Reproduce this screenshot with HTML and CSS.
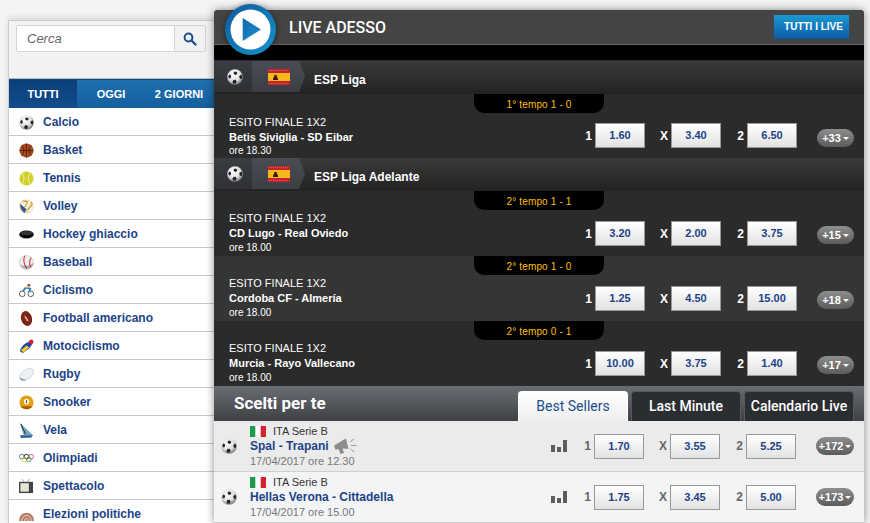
FILE: index.html
```html
<!DOCTYPE html>
<html lang="it">
<head>
<meta charset="utf-8">
<title>Live adesso</title>
<link rel="stylesheet" href="styles.css">
</head>
<body>
<svg class="defs" width="0" height="0" aria-hidden="true">
  <defs>
    <radialGradient id="ballg" cx="42%" cy="35%" r="68%"><stop offset="0" stop-color="#fff"/><stop offset=".6" stop-color="#dedede"/><stop offset="1" stop-color="#6e6e6e"/></radialGradient>
    <symbol id="ball" viewBox="0 0 16 16">
      <circle cx="8" cy="8" r="7.8" fill="url(#ballg)"/>
      <path d="M8.200 2.600l2 .9-.3 1.800-1.800.6-1.500-1.100.2-1.600zM2.400 5.400l1.300.5.400 2.100-1.100 1.400-1.400-.5-.2-2zM12.700 6.400l2-.6.500 2.200-.6 2-1.500-.3-.9-1.700zM6.400 11l2.300-.2.900 1.900-1.100 2.100-2.200-.2-.9-1.500z" fill="#242424"/>
    </symbol>
    <symbol id="flag-es" viewBox="0 0 22 16">
      <rect width="22" height="16" fill="#c8202c"/>
      <rect y="4" width="22" height="8" fill="#f4b81c"/>
      <path d="M5 11h5V9.500L8.700 7.500 8.700 6H6.300v1.500L5 9.500z" fill="#3a1c10"/>
      <path d="M1 1.500h20M1 14.500h20" stroke="#e7838a" stroke-dasharray="1 1" stroke-width=".6"/>
    </symbol>
    <symbol id="flag-it" viewBox="0 0 16 11">
      <rect width="16" height="11" fill="#fff"/>
      <rect width="5.300" height="11" fill="#1f9a4b"/>
      <rect x="10.700" width="5.300" height="11" fill="#d3232f"/>
    </symbol>
    <symbol id="bars" viewBox="0 0 16 12">
      <path d="M0 5h4v7H0zM6 7h4v5H6zM12 0h4v12h-4z" fill="#5d5d5d"/>
    </symbol>
  </defs>
</svg>

<aside class="sidebar">
  <div class="search-area">
    <div class="search">
      <span class="search-input">Cerca</span>
      <span class="search-btn">
        <svg width="14" height="14" viewBox="0 0 14 14"><circle cx="5.500" cy="5.500" r="3.900" fill="none" stroke="#1c4f8e" stroke-width="2"/><path d="M8.500 8.500l4 4" stroke="#1c4f8e" stroke-width="2.400" stroke-linecap="round"/></svg>
      </span>
    </div>
  </div>
  <nav class="period-tabs">
    <span class="period-tab is-active">TUTTI</span>
    <span class="period-tab">OGGI</span>
    <span class="period-tab">2 GIORNI</span>
  </nav>
  <ul class="sports">
    <li class="sport"><svg class="sport-icon" viewBox="0 0 16 16"><use href="#ball"/></svg>Calcio</li>
    <li class="sport"><svg class="sport-icon" viewBox="0 0 16 16"><circle cx="8" cy="8" r="7.500" fill="#a8481c"/><path d="M.5 8h15M8 .5v15M3 2.500c3 3 3 8 0 11M13 2.500c-3 3-3 8 0 11" stroke="#40190a" fill="none" stroke-width=".8"/></svg>Basket</li>
    <li class="sport"><svg class="sport-icon" viewBox="0 0 16 16"><circle cx="8" cy="8" r="7.500" fill="#cfd02e"/><path d="M3 2c3 3 3 9 0 12M12 1.500c-2.500 3-2.500 10 0 13" stroke="#f2f2a0" fill="none"/></svg>Tennis</li>
    <li class="sport"><svg class="sport-icon" viewBox="0 0 16 16"><circle cx="8" cy="8" r="7.500" fill="#e8d9a8"/><path d="M1 6c3-3 8-5 12-3L8 11zM8 11l6-6c1 3 1 6-1 8-2 1-4 1-5-2z" fill="#f3f3f3"/><path d="M1.200 5C1 8 2 12 6 15l2-4z" fill="#34598e"/><path d="M4 2l5 1L6 9M13 3l1 3-5 6" stroke="#d8a32a" fill="none" stroke-width="1.400"/></svg>Volley</li>
    <li class="sport"><svg class="sport-icon" viewBox="0 0 16 16"><ellipse cx="8" cy="8" rx="7.800" ry="4.300" fill="#0a0a0a"/><ellipse cx="8" cy="6.500" rx="7" ry="2.300" fill="#333"/></svg>Hockey ghiaccio</li>
    <li class="sport"><svg class="sport-icon" viewBox="0 0 16 16"><circle cx="8" cy="8" r="7.500" fill="#eee" stroke="#aaa" stroke-width=".5"/><path d="M1 10c2 5 8 6 12 3 2-2 2.500-4 2.500-5-3 4-10 5-14.500 2z" fill="#a8a8a8"/><path d="M6 1c-1.500 4-1 9 2.500 13.500M13 3c-2 3-2 7-.5 10" stroke="#c8323a" fill="none" stroke-width="1.100"/></svg>Baseball</li>
    <li class="sport"><svg class="sport-icon" viewBox="0 0 16 16"><circle cx="3.500" cy="11.500" r="3" fill="none" stroke="#555"/><circle cx="12.500" cy="11.500" r="3" fill="none" stroke="#555"/><path d="M4 9l3-4 5 1-1 4" fill="none" stroke="#2c7bc0" stroke-width="2"/><circle cx="10.500" cy="2.500" r="1.600" fill="#8a3fa8"/><path d="M7 5l4-1" stroke="#e3c22a" stroke-width="1.500"/></svg>Ciclismo</li>
    <li class="sport"><svg class="sport-icon" viewBox="0 0 16 16"><ellipse cx="8" cy="8" rx="5.800" ry="8" transform="rotate(-15 8 8)" fill="#7c2415"/><path d="M6 5l4 6M6.500 8l2-1M7.500 10l2-1" stroke="#eddcc8"/></svg>Football americano</li>
    <li class="sport"><svg class="sport-icon" viewBox="0 0 16 16"><path d="M1 13c1-5 5-9 12-11l2 2-4 6-7 5z" fill="#2446a8"/><circle cx="13" cy="3" r="2.400" fill="#d8232a"/><path d="M2 12l6-5 3 2-6 5z" fill="#f0cf22"/></svg>Motociclismo</li>
    <li class="sport"><svg class="sport-icon" viewBox="0 0 16 16"><ellipse cx="8" cy="8" rx="8.500" ry="5" transform="rotate(-35 8 8)" fill="#eef0f2" stroke="#b9c4cf" stroke-width=".6"/><path d="M1.500 12c2 2 3 2.500 5 1.500" stroke="#5a8cc0" fill="none" stroke-width="1.200"/></svg>Rugby</li>
    <li class="sport"><svg class="sport-icon" viewBox="0 0 16 16"><circle cx="8" cy="8" r="7.500" fill="#e2a011"/><path d="M1.500 12c3 4 10 4 13 0z" fill="#a8590f"/><circle cx="8" cy="7" r="3" fill="#fbf3d8"/><path d="M8 5.500v3" stroke="#333"/></svg>Snooker</li>
    <li class="sport"><svg class="sport-icon" viewBox="0 0 16 16"><path d="M1 0l14 13H5z" fill="#6fa7c4"/><path d="M2 1l5 11" stroke="#222"/><path d="M1 13l14 0-2 2.500-11 .5z" fill="#2c5e8e"/></svg>Vela</li>
    <li class="sport"><svg class="sport-icon" viewBox="0 0 16 16"><g fill="none" stroke-width="1"><circle cx="3" cy="6" r="2.500" stroke="#3a7fc0"/><circle cx="8" cy="6" r="2.500" stroke="#222"/><circle cx="13" cy="6" r="2.500" stroke="#e0606a"/><circle cx="5.500" cy="9" r="2.500" stroke="#ecc92e"/><circle cx="10.500" cy="9" r="2.500" stroke="#3aa65e"/></g></svg>Olimpiadi</li>
    <li class="sport"><svg class="sport-icon" viewBox="0 0 16 16"><path d="M5 3L3 0M9 3l2-3" stroke="#888" stroke-width=".8"/><rect y="3" width="15" height="12" fill="#444"/><rect x="1.500" y="4.500" width="9" height="9" fill="#e9e5d6"/></svg>Spettacolo</li>
    <li class="sport"><svg class="sport-icon" viewBox="0 0 16 16"><path d="M0 15C0 3 16 3 16 15z" fill="#b77d6b"/><path d="M3 15C3 7 13 7 13 15M6 15c0-4 4-4 4 0" fill="none" stroke="#eed9cc"/></svg>Elezioni politiche</li>
  </ul>
</aside>

<main class="panel">
  <header class="panel-head">
    <span class="play">
      <svg width="51" height="51" viewBox="0 0 51 51"><defs><linearGradient id="ring" x1="0" y1="0" x2="1" y2="1"><stop offset="0" stop-color="#0e5ba0"/><stop offset="1" stop-color="#1592c9"/></linearGradient><linearGradient id="tri" x1="0" y1="0" x2="1" y2="1"><stop offset="0" stop-color="#1269b0"/><stop offset="1" stop-color="#1b8fcb"/></linearGradient></defs><circle cx="25.500" cy="25.500" r="25.500" fill="url(#ring)"/><circle cx="25.500" cy="25.500" r="20" fill="#fff"/><path d="M17.700 14L36 25.500 17.700 37z" fill="url(#tri)"/></svg>
    </span>
    <h1 class="panel-title">LIVE ADESSO</h1>
    <a class="all-live">TUTTI I LIVE</a>
  </header>
  <div class="black-strip"></div>

  <div class="league">
    <span class="crumb crumb-ball"><svg class="ball-icon" viewBox="0 0 16 16"><use href="#ball"/></svg></span>
    <span class="crumb crumb-flag"><svg class="flag-icon" viewBox="0 0 22 16"><use href="#flag-es"/></svg></span>
    <span class="league-name">ESP Liga</span>
  </div>
  <div class="match match-a match-first">
    <div class="clock">1° tempo 1 - 0</div>
    <div class="match-info"><div class="market">ESITO FINALE 1X2</div><div class="teams">Betis Siviglia - SD Eibar</div><div class="time">ore 18.30</div></div>
    <div class="odds"><span class="sign">1</span><span class="odd">1.60</span><span class="sign">X</span><span class="odd">3.40</span><span class="sign">2</span><span class="odd">6.50</span></div>
    <span class="more">+33</span>
  </div>

  <div class="league">
    <span class="crumb crumb-ball"><svg class="ball-icon" viewBox="0 0 16 16"><use href="#ball"/></svg></span>
    <span class="crumb crumb-flag"><svg class="flag-icon" viewBox="0 0 22 16"><use href="#flag-es"/></svg></span>
    <span class="league-name">ESP Liga Adelante</span>
  </div>
  <div class="match match-a">
    <div class="clock">2° tempo 1 - 1</div>
    <div class="match-info"><div class="market">ESITO FINALE 1X2</div><div class="teams">CD Lugo - Real Oviedo</div><div class="time">ore 18.00</div></div>
    <div class="odds"><span class="sign">1</span><span class="odd">3.20</span><span class="sign">X</span><span class="odd">2.00</span><span class="sign">2</span><span class="odd">3.75</span></div>
    <span class="more">+15</span>
  </div>
  <div class="match match-b">
    <div class="clock">2° tempo 1 - 0</div>
    <div class="match-info"><div class="market">ESITO FINALE 1X2</div><div class="teams">Cordoba CF - Almería</div><div class="time">ore 18.00</div></div>
    <div class="odds"><span class="sign">1</span><span class="odd">1.25</span><span class="sign">X</span><span class="odd">4.50</span><span class="sign">2</span><span class="odd">15.00</span></div>
    <span class="more">+18</span>
  </div>
  <div class="match match-a">
    <div class="clock">2° tempo 0 - 1</div>
    <div class="match-info"><div class="market">ESITO FINALE 1X2</div><div class="teams">Murcia - Rayo Vallecano</div><div class="time">ore 18.00</div></div>
    <div class="odds"><span class="sign">1</span><span class="odd">10.00</span><span class="sign">X</span><span class="odd">3.75</span><span class="sign">2</span><span class="odd">1.40</span></div>
    <span class="more">+17</span>
  </div>

  <div class="picks-bar">
    <h2 class="picks-title">Scelti per te</h2>
    <div class="picks-tabs">
      <span class="picks-tab is-active">Best Sellers</span>
      <span class="picks-tab">Last Minute</span>
      <span class="picks-tab">Calendario Live</span>
    </div>
  </div>

  <div class="pick pick-a">
    <svg class="pick-ball" viewBox="0 0 16 16"><use href="#ball"/></svg>
    <div class="pick-info">
      <div class="pick-league"><svg class="pick-flag" viewBox="0 0 16 11"><use href="#flag-it"/></svg>ITA Serie B</div>
      <div class="pick-teams">Spal - Trapani
        <svg class="horn" width="24" height="18" viewBox="0 0 24 18"><path d="M1 8.500L13 1.500l2.500 10.500-6-.5 1.500 4.500-3.500 1-2-5-3 .8z" fill="#8c8c8c"/><path d="M17 5l4-3M18 8.500h5.500M17.500 12l4 3" stroke="#9a9a9a" fill="none"/></svg>
      </div>
      <div class="pick-date">17/04/2017 ore 12.30</div>
    </div>
    <svg class="bars-icon" viewBox="0 0 16 12"><use href="#bars"/></svg>
    <div class="odds odds-light"><span class="sign">1</span><span class="odd">1.70</span><span class="sign">X</span><span class="odd">3.55</span><span class="sign">2</span><span class="odd">5.25</span></div>
    <span class="more">+172</span>
  </div>
  <div class="pick pick-b">
    <svg class="pick-ball" viewBox="0 0 16 16"><use href="#ball"/></svg>
    <div class="pick-info">
      <div class="pick-league"><svg class="pick-flag" viewBox="0 0 16 11"><use href="#flag-it"/></svg>ITA Serie B</div>
      <div class="pick-teams">Hellas Verona - Cittadella</div>
      <div class="pick-date">17/04/2017 ore 15.00</div>
    </div>
    <svg class="bars-icon" viewBox="0 0 16 12"><use href="#bars"/></svg>
    <div class="odds odds-light"><span class="sign">1</span><span class="odd">1.75</span><span class="sign">X</span><span class="odd">3.45</span><span class="sign">2</span><span class="odd">5.00</span></div>
    <span class="more">+173</span>
  </div>
</main>
</body>
</html>
```

FILE: styles.css
```css
* { box-sizing: border-box; }
html, body { height: 523px; overflow: hidden; }
body {
  margin: 0;
  padding: 10px 6px 0 8px;
  display: flex;
  align-items: flex-start;
  background: #f4f4f4;
  font-family: "Liberation Sans", Arial, sans-serif;
}
.defs { position: absolute; }

/* Sidebar */
.sidebar {
  flex: 0 0 206px;
  margin-top: 10px;
  background: #fff;
  border-left: 1px solid #ccc;
  box-shadow: 0 -3px 6px rgba(0,0,0,.1);
}
.search-area {
  height: 59px;
  padding: 4px 8px 0 7px;
  background: #f2f2f2;
  border-top: 1px solid #ccc;
  border-bottom: 1px solid #bbb;
}
.search {
  display: flex;
  height: 27px;
  border: 1px solid #d4d4d4;
  border-radius: 2px;
}
.search-input {
  flex: 1;
  background: #fff;
  padding-left: 10px;
  font: italic 13px/25px "Liberation Sans", sans-serif;
  color: #666;
  border-right: 1px solid #d4d4d4;
}
.search-btn {
  width: 30px;
  display: flex;
  align-items: center;
  justify-content: center;
}
.period-tabs {
  display: flex;
  height: 29px;
  background: linear-gradient(#1f6fae, #155f9f);
  border-top: 1px solid #0d4a85;
}
.period-tab {
  width: 68px;
  text-align: center;
  font: bold 11px/28px "Liberation Sans", sans-serif;
  color: #fff;
}
.period-tab.is-active { background: linear-gradient(#0b3f7a, #114c8c); }
.sports { margin: 0; padding: 0; list-style: none; }
.sport {
  display: flex;
  align-items: center;
  height: 28px;
  padding: 1px 0 0 10px;
  border-bottom: 1px solid #c9c9c9;
  font-size: 12px;
  font-weight: bold;
  color: #1c4388;
}
.sport-icon { width: 15px; height: 15px; margin-right: 9px; flex: none; }

/* Panel */
.panel {
  position: relative;
  flex: 0 0 650px;
  background: #2c2c2c;
  border-radius: 4px 4px 0 0;
  box-shadow: 0 0 8px rgba(0,0,0,.45);
}
.panel-head {
  display: flex;
  align-items: center;
  height: 35px;
  padding: 0 15px 0 75px;
  background: #444;
  border-radius: 4px 4px 0 0;
  border-bottom: 1px solid #666;
}
.play {
  position: absolute;
  left: 11px;
  top: -6px;
  width: 51px;
  height: 51px;
  filter: drop-shadow(0 1px 3px rgba(0,0,0,.5));
}
.panel-title {
  flex: 1;
  margin: 0;
  font: 500 16px/35px Roboto, sans-serif;
  color: #fff;
}
.all-live {
  width: 75px;
  height: 24px;
  padding-left: 4px;
  background: linear-gradient(#1a9ad0, #0c5aa6);
  font: bold 10px/24px "Liberation Sans", sans-serif;
  color: #fff;
  text-align: center;
}
.black-strip { height: 16px; background: #000; border-bottom: 1px solid #2e2e2e; }
.league {
  display: flex;
  align-items: flex-start;
  height: 33px;
  background: linear-gradient(#3a3a3a, #222);
}
.crumb {
  display: flex;
  align-items: center;
  height: 31px;
  clip-path: polygon(0 0, calc(100% - 6px) 0, 100% 50%, calc(100% - 6px) 100%, 0 100%);
}
.crumb-ball { width: 44px; padding-left: 13px; background: linear-gradient(#393c41, #2f3135); }
.crumb-flag { width: 53px; margin-left: -6px; padding-left: 16px; background: linear-gradient(#4a4d53, #3b3e43); }
.ball-icon { width: 16px; height: 16px; }
.flag-icon { width: 22px; height: 16px; }
.league-name {
  margin-left: 9px;
  line-height: 38px;
  font-size: 12px;
  font-weight: bold;
  color: #fff;
}
.match {
  position: relative;
  display: flex;
  align-items: flex-start;
  height: 65px;
  padding-top: 20px;
}
.match-first { height: 64px; padding-top: 21px; }
.match-a { background: #2b2b2b; }
.match-b { background: #353535; }
.clock {
  position: absolute;
  left: 260px;
  top: 0;
  width: 130px;
  height: 19px;
  background: #000;
  border-radius: 0 0 10px 10px;
  font-size: 10px;
  letter-spacing: .15px;
  line-height: 21px;
  color: #ffbf00;
  text-align: center;
}
.match-info { width: 364px; padding-left: 15px; color: #fff; font-size: 11px; line-height: 14.500px; }
.teams { font-weight: bold; }
.time { margin-top: 1px; font-size: 10px; }
.match-first .time { margin-top: 0; }
.odds {
  display: flex;
  align-items: center;
  height: 25px;
  margin-top: 10px;
  color: #fff;
}
.match-first .odds { margin-top: 8px; }
.sign {
  width: 17px;
  text-align: right;
  padding-right: 3px;
  font-size: 12px;
  font-weight: bold;
}
.sign:not(:first-child) { width: 26px; }
.odd {
  width: 50px;
  height: 25px;
  background: linear-gradient(#fff, #e2e2e2);
  border: 1px solid #999;
  font: bold 11px/23px "Liberation Sans", sans-serif;
  color: #1c4388;
  text-align: center;
}
.match .more { margin-top: 15px; margin-left: 20px; }
.match-first .more { margin-top: 14px; }
.more {
  width: 37px;
  height: 18px;
  border-radius: 9px;
  background: linear-gradient(#8e8e8e, #5b5b5b);
  font: bold 11px/18px "Liberation Sans", sans-serif;
  color: #fff;
  text-align: center;
  white-space: nowrap;
  flex: none;
}
.more::after {
  content: "";
  display: inline-block;
  margin-left: 2px;
  vertical-align: 2px;
  border: 3px solid transparent;
  border-top-color: #fff;
  border-bottom-width: 0;
}

/* Scelti per te */
.picks-bar {
  display: flex;
  justify-content: space-between;
  align-items: flex-end;
  height: 35px;
  padding: 0 10px 0 20px;
  background: linear-gradient(#6a6e74, #3e4043);
}
.picks-title {
  align-self: flex-start;
  margin: 0;
  font: bold 17px/35px Roboto, sans-serif;
  color: #fff;
}
.picks-tabs { display: flex; gap: 3px; }
.picks-tab {
  width: 110px;
  height: 30px;
  background: #2b2e31;
  border: 1px solid #55585c;
  border-bottom: 0;
  border-radius: 4px 4px 0 0;
  font: 500 14px/29px Roboto, sans-serif;
  color: #fff;
  text-align: center;
}
.picks-tab.is-active { background: linear-gradient(#fff, #eee); border-color: #fff; color: #1c4d8c; font-weight: 400; }
.pick {
  display: flex;
  align-items: center;
  height: 51px;
  border-bottom: 1px solid #cfcfcf;
}
.pick-a { background: #ebebeb; }
.pick-b { background: #f3f4f6; }
.pick-ball { width: 16px; height: 16px; margin-left: 7px; margin-right: 0; flex: none; }
.pick-info { width: 307px; padding-left: 13px; }
.pick-league { display: flex; align-items: center; font-size: 11px; line-height: 15px; color: #333; }
.pick-flag { width: 16px; height: 11px; margin-right: 7px; }
.pick-teams { display: flex; align-items: center; height: 15px; gap: 4px; font-size: 12px; font-weight: bold; color: #1c4388; }
.pick-date { font-size: 11px; line-height: 15px; color: #777; }
.bars-icon { width: 16px; height: 12px; margin-left: 7px; flex: none; }
.odds-light { margin: 0 0 0 10px; color: #666; }
.pick .more { margin-left: 20px; width: 38px; }
```
